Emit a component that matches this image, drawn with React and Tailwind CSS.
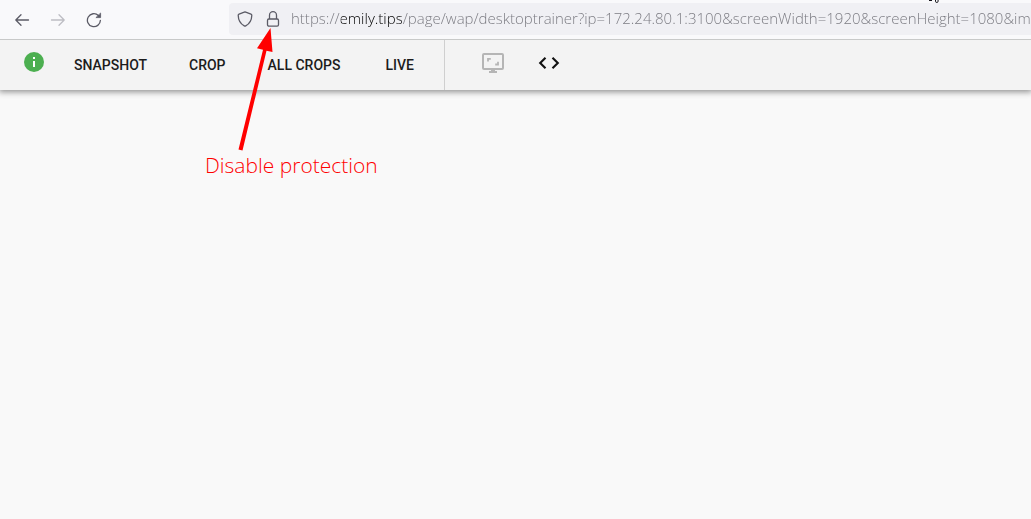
import React, { useState } from "react";

const PAGE_URL =
  "https://emily.tips/page/wap/desktoptrainer?ip=172.24.80.1:3100&screenWidth=1920&screenHeight=1080&imageWidth=1920";

function BrowserBar() {
  const [url, setUrl] = useState(PAGE_URL);
  return (
    <header className="relative z-10 flex h-10 items-center overflow-hidden border-b border-[#c8c9c9] bg-[#f9f9fb]">
      <nav className="flex w-[229px] shrink-0 items-center gap-4 pl-3 text-[#5b5b66]">
        <button type="button" aria-label="Back" className="flex size-5 items-center justify-center">
          <svg className="size-4" viewBox="0 0 16 16" fill="none" stroke="currentColor" strokeWidth="1.3" strokeLinecap="round" strokeLinejoin="round">
            <path d="M14.5 8H1.8M7 2.8 1.8 8 7 13.2" />
          </svg>
        </button>
        <button type="button" aria-label="Forward" disabled className="flex size-5 items-center justify-center text-[#bdbdc3]">
          <svg className="size-4" viewBox="0 0 16 16" fill="none" stroke="currentColor" strokeWidth="1.3" strokeLinecap="round" strokeLinejoin="round">
            <path d="M1.5 8h12.7M9 2.8 14.2 8 9 13.2" />
          </svg>
        </button>
        <button type="button" aria-label="Reload" className="flex size-5 items-center justify-center">
          <svg className="size-4" viewBox="0 0 16 16" fill="none" stroke="currentColor" strokeWidth="1.3" strokeLinecap="round">
            <path d="M14.4 8.3A6.5 6.5 0 1 1 12.4 3.5" />
            <path d="M14.6 1.4v4.2h-4.3z" fill="currentColor" strokeWidth="0.8" strokeLinejoin="round" />
          </svg>
        </button>
      </nav>
      <div className="mb-px flex h-8 min-w-0 flex-1 items-center rounded-l bg-[#f0f0f4] pl-2 text-[#5b5b66]">
        <button type="button" aria-label="Tracking protection" className="mr-3 flex size-4 shrink-0 items-center justify-center">
          <svg className="size-4" viewBox="0 0 16 16" fill="none" stroke="currentColor" strokeWidth="1.3" strokeLinejoin="round">
            <path d="M8 .9 14 3.1c.5.2.8.6.8 1.1-.1 4.6-2 8.4-6.1 10.7a1.4 1.4 0 0 1-1.4 0C3.2 12.6 1.3 8.8 1.2 4.2c0-.5.3-.9.8-1.1z" />
          </svg>
        </button>
        <button type="button" aria-label="Connection security" className="mr-2.5 flex size-4 shrink-0 items-center justify-center">
          <svg className="size-4" viewBox="0 0 16 16" fill="none" stroke="currentColor" strokeWidth="1.3">
            <rect x="2.5" y="8" width="11" height="7.2" rx="1.4" />
            <path d="M4.5 8V4.2a3.5 3.5 0 0 1 7 0V8" />
          </svg>
        </button>
        <input
          type="text"
          aria-label="Address"
          value={url}
          onChange={(e) => setUrl(e.target.value)}
          className="mb-0.5 h-7 min-w-0 flex-1 bg-[linear-gradient(90deg,#77777e_50px,#000000_50px,#000000_111px,#77777e_111px)] bg-clip-text font-['Open_Sans','Noto_Sans',sans-serif] text-[15px] font-light text-transparent outline-none"
        />
      </div>
      <svg className="absolute top-0 right-[90px] h-[3px] w-3" viewBox="0 0 12 3" fill="none" stroke="#15141a">
        <path d="M0 .5h3M6.500 0v1.200a1.300 1.300 0 0 0 2.600 0V0" />
      </svg>
    </header>
  );
}

function Toolbar() {
  return (
    <nav className="relative flex h-[50px] items-center bg-[#f3f3f3] font-[Roboto,sans-serif] text-sm font-medium text-[#1c1c1c] shadow-[0_1px_6px_1px_rgba(0,0,0,0.42)]">
      <div className="flex h-full w-[445px] shrink-0 items-center border-r border-[#cfcfcf] pl-[22px]">
        <button type="button" aria-label="Information" className="mb-1.5 mr-7 text-[#4caf50]">
          <svg className="size-6" viewBox="0 0 24 24" fill="currentColor">
            <path d="M12 2a10 10 0 1 0 0 20 10 10 0 0 0 0-20z" />
            <path d="M11 7h2v2h-2zM11 11h2v6h-2z" fill="#fff" />
          </svg>
        </button>
        <button type="button" className="mr-[42px]">SNAPSHOT</button>
        <button type="button" className="mr-[42px]">CROP</button>
        <button type="button" className="mr-[45px] whitespace-nowrap">ALL CROPS</button>
        <button type="button">LIVE</button>
      </div>
      <button type="button" aria-label="Fit to screen" className="mb-1 ml-9 text-[#b5b5b5]">
        <svg className="size-6" viewBox="0 0 24 24" fill="none" stroke="currentColor" strokeWidth="2">
          <rect x="2" y="3" width="20" height="15" rx="1" />
          <path d="M8 21h8M10 19.500h4M7 10.500V7.800H9.800M17 10.800v2.700H14.200" strokeWidth="1.800" />
        </svg>
      </button>
      <button type="button" aria-label="View code" className="mb-1 ml-8 text-[#111]">
        <svg className="size-6" viewBox="0 0 24 24" fill="none" stroke="currentColor" strokeWidth="2.1">
          <path d="M8.500 6.700 3.200 12l5.300 5.300M15.500 6.700l5.300 5.300-5.300 5.300" />
        </svg>
      </button>
    </nav>
  );
}

function Annotation() {
  return (
    <div className="pointer-events-none absolute top-[28px] left-[205px] z-20 text-[#ff0000]">
      <svg className="ml-[30px] h-[123px] w-[42px]" viewBox="0 0 42 123" fill="currentColor">
        <path d="M35.5 0 37.5 24 31.5 22.7 7.5 122.5 3.5 121.5 28 21.8 22 20.2z" />
      </svg>
      <p className="whitespace-nowrap font-['Open_Sans','Noto_Sans',sans-serif] text-[21px] leading-7 font-light">
        Disable protection
      </p>
    </div>
  );
}

export default function App() {
  return (
    <div className="relative min-h-screen bg-[#f9f9f9]">
      <BrowserBar />
      <Toolbar />
      <main aria-label="Preview" />
      <Annotation />
    </div>
  );
}
